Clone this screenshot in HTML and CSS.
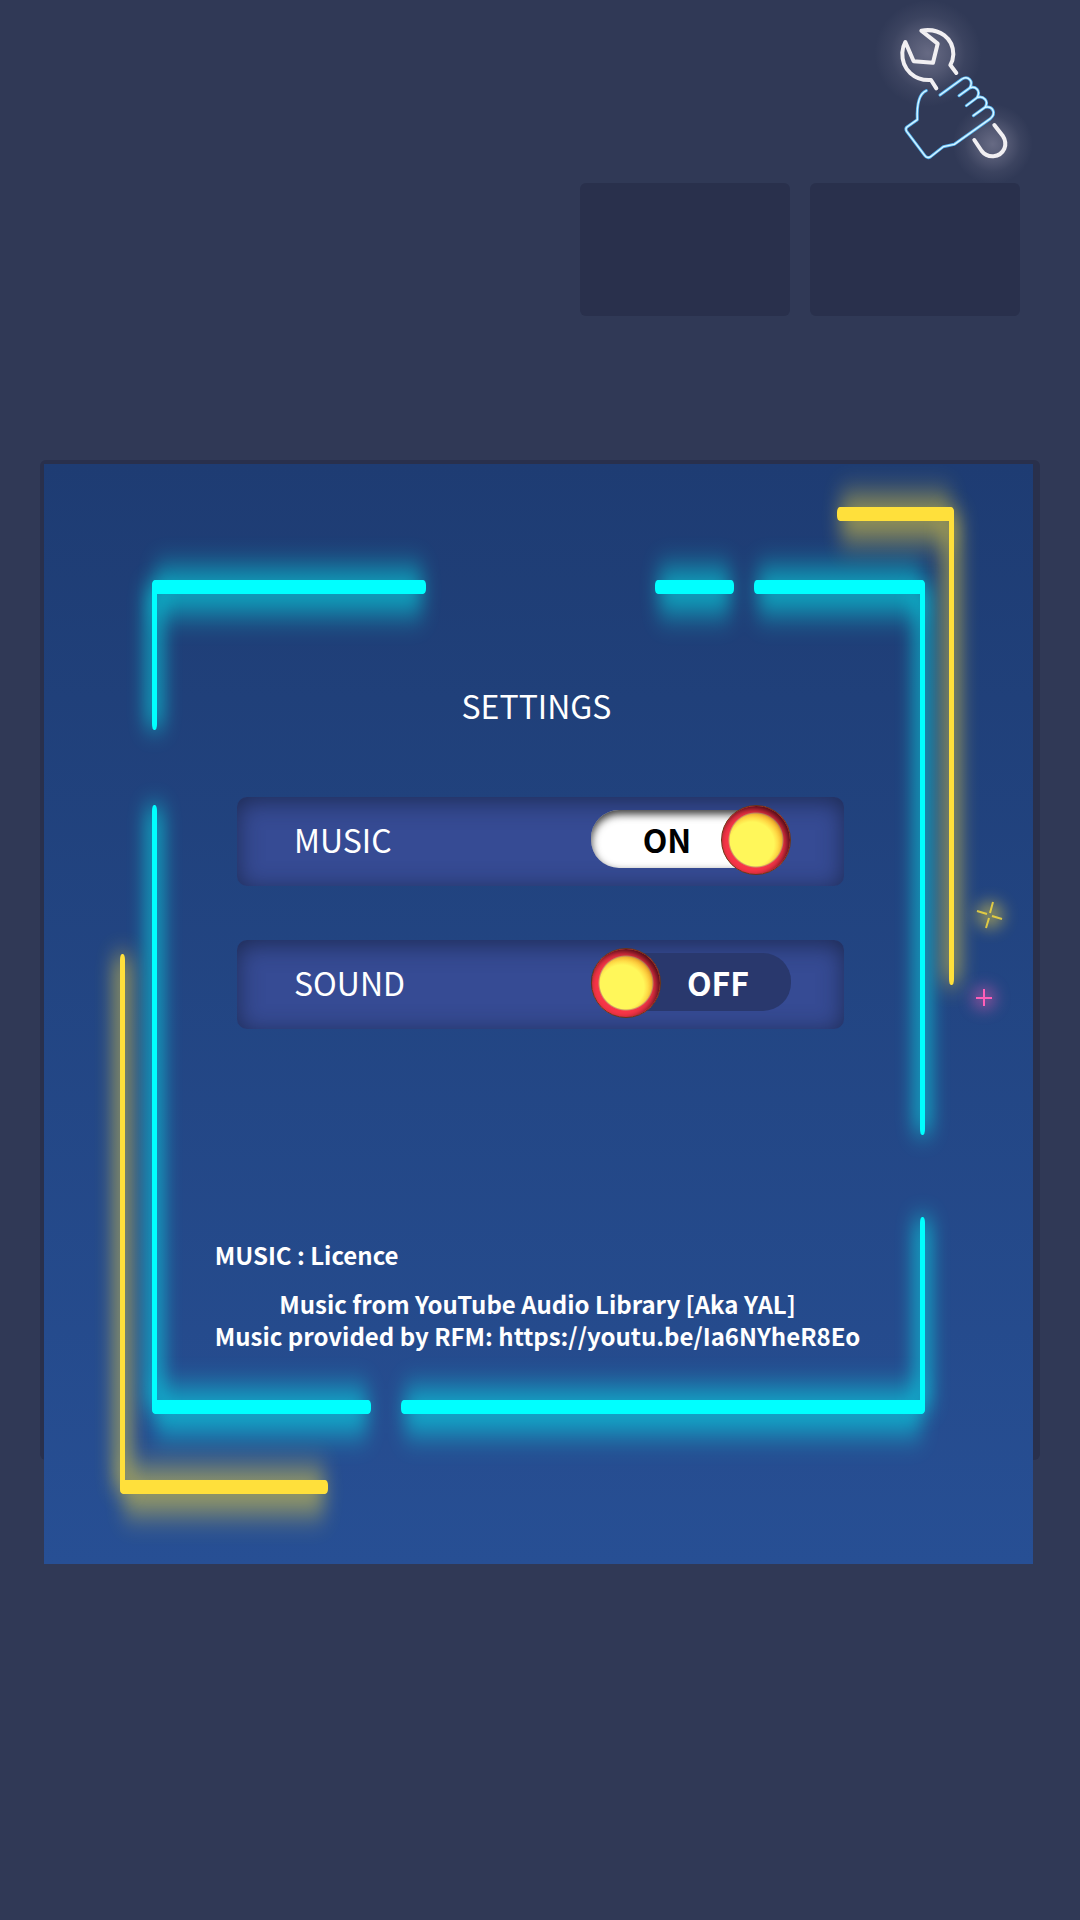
FILE: index.html
```html
<!DOCTYPE html>
<html lang="en">
<head>
<meta charset="utf-8">
<meta name="viewport" content="width=device-width, initial-scale=1">
<title>Settings</title>
<link rel="stylesheet" href="styles.css">
</head>
<body>
<header class="topbar">
  <button class="tools" type="button" aria-label="Settings">
    <svg class="tools-icon" viewBox="0 0 600 549" aria-hidden="true">
      <defs>
        <radialGradient id="halo">
          <stop offset="0" stop-color="#b9b4c8" stop-opacity=".4"/>
          <stop offset=".4" stop-color="#b9b4c8" stop-opacity=".24"/>
          <stop offset=".7" stop-color="#b9b4c8" stop-opacity=".08"/>
          <stop offset="1" stop-color="#b9b4c8" stop-opacity="0"/>
        </radialGradient>
      </defs>
      <circle cx="204" cy="160" r="160" fill="url(#halo)"/>
      <circle cx="398" cy="432" r="120" fill="url(#halo)"/>
      <g class="steel">
        <path d="M229 265L213 240C165 243 125 210 127 158Q128 140 136 126L161 184L219 188L233 131L184 92C240 83 280 115 280 163Q279 182 271 195L289 219"/>
        <path d="M403 375L428 407Q441 427 433 446C420 475 382 475 365 453L343 420"/>
      </g>
      <path class="hand" d="M199 272C175 282 170 315 172 359L141 381Q135 386 140 394L194 466Q202 477 212 470L250 440L283 433L391 356C410 339 398 317 375 322C388 303 370 286 351 293C364 271 346 257 329 264C342 243 324 226 306 237L240 285M329 264L297 287M351 293L319 317M375 322L340 347"/>
      <path class="hand-core" d="M199 272C175 282 170 315 172 359L141 381Q135 386 140 394L194 466Q202 477 212 470L250 440L283 433L391 356C410 339 398 317 375 322C388 303 370 286 351 293C364 271 346 257 329 264C342 243 324 226 306 237L240 285M329 264L297 287M351 293L319 317M375 322L340 347"/>
    </svg>
  </button>
  <div class="slots">
    <div class="slot"></div>
    <div class="slot"></div>
  </div>
</header>

<main class="board">
  <div class="board-back"></div>
  <section class="panel" aria-labelledby="title">
    <svg class="neon" viewBox="0 0 989 1100" preserveAspectRatio="none" aria-hidden="true">
      <defs>
        <filter id="wide" filterUnits="userSpaceOnUse" x="0" y="0" width="989" height="1100">
          <feGaussianBlur stdDeviation="9 15"/>
        </filter>
        <filter id="tall" filterUnits="userSpaceOnUse" x="0" y="0" width="989" height="1100">
          <feGaussianBlur stdDeviation="9 12"/>
        </filter>
        <filter id="spark" filterUnits="userSpaceOnUse" x="900" y="400" width="89" height="180">
          <feGaussianBlur stdDeviation="8"/>
        </filter>
      </defs>
      <g class="cyan">
        <g class="glow" filter="url(#wide)">
          <path d="M112 105H378V149H112zM615 105H686V149H615zM714 105H877V149H714zM112 925H323V969H112zM361 925H877V969H361z"/>
        </g>
        <g class="glow" filter="url(#tall)">
          <path d="M102 122H119V264H102zM102 343H119V944H102zM870 122H887V669H870zM870 755H887V944H870z"/>
        </g>
        <rect x="108" y="116" width="274" height="14" rx="3" ry="5"/>
        <rect x="611" y="116" width="79" height="14" rx="3" ry="5"/>
        <rect x="710" y="116" width="171" height="14" rx="3" ry="5"/>
        <rect x="108" y="936" width="219" height="14" rx="3" ry="5"/>
        <rect x="357" y="936" width="524" height="14" rx="3" ry="5"/>
        <rect x="108" y="117" width="5" height="149" rx="2" ry="6"/>
        <rect x="108" y="341" width="5" height="608" rx="2" ry="6"/>
        <rect x="876" y="117" width="5" height="554" rx="2" ry="6"/>
        <rect x="876" y="753" width="5" height="196" rx="2" ry="6"/>
      </g>
      <g class="yellow">
        <g class="glow" filter="url(#wide)">
          <path d="M797 32H906V76H797zM80 1005H280V1049H80z"/>
        </g>
        <g class="glow" filter="url(#tall)">
          <path d="M899 49H916V519H899zM70 492H87V1024H70z"/>
        </g>
        <rect x="793" y="43" width="117" height="14" rx="3" ry="5"/>
        <rect x="905" y="44" width="5" height="477" rx="2" ry="6"/>
        <rect x="76" y="1016" width="208" height="14" rx="3" ry="5"/>
        <rect x="76" y="490" width="5" height="539" rx="2" ry="6"/>
        <circle class="glow-soft" cx="946" cy="451" r="13" filter="url(#spark)"/>
        <path class="spark-y" d="M933 447L943 450M948 452L958 455M949 438L946 449M945 454L942 464"/>
      </g>
      <g class="pink">
        <circle class="glow-soft" cx="940" cy="534" r="11" filter="url(#spark)"/>
        <path class="spark-p" d="M932 534H948M940 525V542"/>
      </g>
    </svg>

    <h1 class="title" id="title">SETTINGS</h1>

    <div class="options">
      <div class="row">
        <label class="row-label" for="music">MUSIC</label>
        <span class="switch">
          <input class="toggle" type="checkbox" id="music" checked>
          <span class="state">ON</span>
        </span>
      </div>
      <div class="row">
        <label class="row-label" for="sound">SOUND</label>
        <span class="switch">
          <input class="toggle" type="checkbox" id="sound">
          <span class="state">OFF</span>
        </span>
      </div>
    </div>

    <div class="licence">
      <h2 class="licence-title">MUSIC : Licence</h2>
      <p class="licence-text">Music from YouTube Audio Library [Aka YAL]<br>Music provided by RFM: <a class="link" href="https://youtu.be/Ia6NYheR8Eo">https://youtu.be/Ia6NYheR8Eo</a></p>
    </div>
  </section>
</main>
<script src="script.js"></script>
</body>
</html>
```
FILE: styles.css
```css
*, *::before, *::after { box-sizing: border-box; }

body {
  margin: 0;
  min-height: 100vh;
  background: #303956;
  color: #fff;
  font-family: "Noto Sans CJK SC", "Noto Sans CJK JP", "Noto Sans", sans-serif;
  font-size: 32px;
  line-height: 48px;
}

.topbar {
  display: flex;
  flex-direction: column;
  align-items: flex-end;
}

.tools {
  display: block;
  margin: 0 20px 0 0;
  padding: 0;
  border: 0;
  background: none;
  cursor: pointer;
}

.tools-icon {
  display: block;
  width: 200px;
  height: 183px;
  overflow: visible;
  fill: none;
  stroke-linecap: round;
  stroke-linejoin: round;
}

.steel { stroke: #f1eff2; stroke-width: 12; }
.hand { stroke: #58b4f2; stroke-width: 9; }
.hand-core { stroke: #d8f6ff; stroke-width: 4; }

.slots {
  display: flex;
  gap: 20px;
  margin-right: 60px;
}

.slot {
  width: 210px;
  height: 133px;
  border-radius: 6px;
  background: #29304c;
}

.board {
  display: grid;
  margin: 144px 40px 0;
}

.board-back {
  grid-area: 1 / 1;
  margin-bottom: 104px;
  border-radius: 6px;
  background: #29304c;
}

.panel {
  grid-area: 1 / 1;
  position: relative;
  display: flex;
  flex-direction: column;
  align-items: center;
  margin: 4px 7px 0 4px;
  padding: 217px 20px 212px;
  background: linear-gradient(#1e3c73, #274f94);
}

.neon {
  position: absolute;
  inset: 0;
  width: 100%;
  height: 100%;
  pointer-events: none;
}

.cyan { fill: #00ffff; }
.yellow { fill: #ffe03b; }
.pink { fill: #ff5fb8; }
.glow { opacity: .54; }
.glow-soft { opacity: .5; }
.spark-y { stroke: #ffe03b; stroke-width: 2; opacity: .8; }
.spark-p { stroke: #ff5fb8; stroke-width: 2; }

.title {
  margin: 0 4px 68px 0;
  font-size: 32px;
  font-weight: 400;
}

.options {
  display: flex;
  flex-direction: column;
  gap: 54px;
  width: 100%;
  max-width: 607px;
  margin-left: 4px;
}

.row {
  display: flex;
  align-items: center;
  justify-content: space-between;
  padding: 8px 53px 11px 57px;
  border-radius: 10px;
  background: #364b94;
  box-shadow: inset 0 4px 24px rgba(18, 28, 56, .7);
}

.row-label { padding-bottom: 3px; }

.switch {
  display: grid;
  width: 200px;
}

.toggle {
  grid-area: 1 / 1;
  appearance: none;
  display: flex;
  align-items: center;
  width: 200px;
  height: 70px;
  margin: 0;
  cursor: pointer;
}

.toggle::before {
  content: "";
  flex: none;
  width: 200px;
  height: 58px;
  margin: 0 -200px 2px 0;
  border-radius: 28px;
  background: #29386d;
}

.toggle::after {
  content: "";
  z-index: 1;
  flex: none;
  width: 70px;
  height: 70px;
  border: 1px solid #6b3418;
  border-radius: 50%;
  background:
    radial-gradient(circle, transparent 26px, #d09a68 27px, #f93648 28px),
    radial-gradient(circle at 30px 38px, #fff75a 22px, #ffa01e 35px);
  box-shadow: inset -3px 3px 7px rgba(40, 0, 10, .85);
}

.toggle:checked::before {
  width: 180px;
  margin-right: -180px;
  background: #fff;
  box-shadow: inset 0 4px 8px rgba(0, 0, 0, .8);
}

.toggle:checked::after { margin-left: 130px; }

.state {
  grid-area: 1 / 1;
  align-self: center;
  z-index: 1;
  padding: 0 0 3px 54px;
  font-weight: 700;
  text-align: center;
  pointer-events: none;
}

.toggle:checked + .state {
  padding: 0 48px 3px 0;
  color: #000;
}

.licence {
  margin: 210px 2px 0 0;
  font-size: 24px;
  font-weight: 700;
  line-height: 32px;
}

.licence-title {
  margin: 0 0 17px;
  font-size: 24px;
  font-weight: 700;
}

.licence-text {
  margin: 0;
  text-align: center;
}

.link {
  color: inherit;
  text-decoration: none;
}
```
FILE: script.js
```js
document.querySelectorAll(".toggle").forEach(function (toggle) {
  toggle.addEventListener("change", function () {
    toggle.nextElementSibling.textContent = toggle.checked ? "ON" : "OFF";
  });
});
```
